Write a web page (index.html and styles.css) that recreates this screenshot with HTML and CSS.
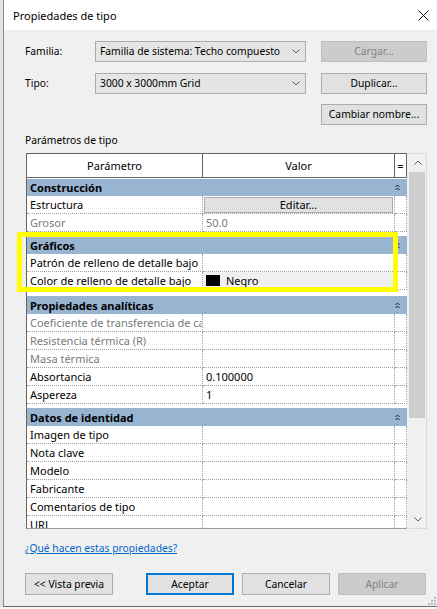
FILE: index.html
```html
<!DOCTYPE html>
<html lang="es">

<head>
    <meta charset="UTF-8">
    <meta name="viewport" content="width=device-width, initial-scale=1.0">
    <title>Propiedades de tipo</title>

    <link rel="stylesheet" href="styles.css">
</head>

<body>

    <div class="desk">
        <div class="strip"></div>

        <div class="dialog">
            <div class="titlebar">
                <span class="title">Propiedades de tipo</span>
                <svg class="close" width="11" height="11" viewBox="0 0 11 11">
                    <path d="M0.5 0.5 L10.5 10.5 M10.5 0.5 L0.5 10.5" stroke="#111" stroke-width="1" fill="none" />
                </svg>
            </div>

            <div class="content">
                <div class="type-form">
                    <label class="label">Familia:</label>
                    <div class="combo">
                        <span>Familia de sistema: Techo compuesto</span>
                        <svg width="8" height="5" viewBox="0 0 8 5"><path d="M0.5 0.5 L4 4 L7.5 0.5" stroke="#555" fill="none" /></svg>
                    </div>
                    <div class="btn disabled">Cargar...</div>

                    <label class="label">Tipo:</label>
                    <div class="combo">
                        <span>3000 x 3000mm Grid</span>
                        <svg width="8" height="5" viewBox="0 0 8 5"><path d="M0.5 0.5 L4 4 L7.5 0.5" stroke="#555" fill="none" /></svg>
                    </div>
                    <div class="btn">Duplicar...</div>

                    <div></div>
                    <div></div>
                    <div class="btn">Cambiar nombre...</div>
                </div>

                <div class="section-label">Parámetros de tipo</div>

                <div class="grid-frame">
                    <div class="props">
                        <div class="row head">
                            <div class="cell">Parámetro</div>
                            <div class="cell">Valor</div>
                            <div class="cell">=</div>
                        </div>

                        <div class="group first">
                            <div class="band"><span>Construcción</span><svg width="5" height="7" viewBox="0 0 5 7"><path d="M0.5 3 L2.5 1 L4.5 3 M0.5 6 L2.5 4 L4.5 6" stroke="#222" fill="none" /></svg></div>
                        </div>
                        <div class="row">
                            <div class="cell">Estructura</div>
                            <div class="cell"><div class="cell-btn">Editar...</div></div>
                            <div class="cell"></div>
                        </div>
                        <div class="row muted">
                            <div class="cell">Grosor</div>
                            <div class="cell">50.0</div>
                            <div class="cell"></div>
                        </div>

                        <div class="group graphics">
                            <div class="band"><span>Gráficos</span><svg width="5" height="7" viewBox="0 0 5 7"><path d="M0.5 3 L2.5 1 L4.5 3 M0.5 6 L2.5 4 L4.5 6" stroke="#222" fill="none" /></svg></div>
                        </div>
                        <div class="row">
                            <div class="cell">Patrón de relleno de detalle bajo</div>
                            <div class="cell"></div>
                            <div class="cell"></div>
                        </div>
                        <div class="row">
                            <div class="cell">Color de relleno de detalle bajo</div>
                            <div class="cell"><div class="color-btn"><span class="swatch"></span>Negro</div></div>
                            <div class="cell"></div>
                        </div>

                        <div class="group analytic">
                            <div class="band"><span>Propiedades analíticas</span><svg width="5" height="7" viewBox="0 0 5 7"><path d="M0.5 3 L2.5 1 L4.5 3 M0.5 6 L2.5 4 L4.5 6" stroke="#222" fill="none" /></svg></div>
                        </div>
                        <div class="row muted">
                            <div class="cell">Coeficiente de transferencia de calor (U)</div>
                            <div class="cell"></div>
                            <div class="cell"></div>
                        </div>
                        <div class="row muted">
                            <div class="cell">Resistencia térmica (R)</div>
                            <div class="cell"></div>
                            <div class="cell"></div>
                        </div>
                        <div class="row muted">
                            <div class="cell">Masa térmica</div>
                            <div class="cell"></div>
                            <div class="cell"></div>
                        </div>
                        <div class="row">
                            <div class="cell">Absortancia</div>
                            <div class="cell">0.100000</div>
                            <div class="cell"></div>
                        </div>
                        <div class="row">
                            <div class="cell">Aspereza</div>
                            <div class="cell">1</div>
                            <div class="cell"></div>
                        </div>

                        <div class="group identity">
                            <div class="band"><span>Datos de identidad</span><svg width="5" height="7" viewBox="0 0 5 7"><path d="M0.5 3 L2.5 1 L4.5 3 M0.5 6 L2.5 4 L4.5 6" stroke="#222" fill="none" /></svg></div>
                        </div>
                        <div class="row">
                            <div class="cell">Imagen de tipo</div>
                            <div class="cell"></div>
                            <div class="cell"></div>
                        </div>
                        <div class="row">
                            <div class="cell">Nota clave</div>
                            <div class="cell"></div>
                            <div class="cell"></div>
                        </div>
                        <div class="row">
                            <div class="cell">Modelo</div>
                            <div class="cell"></div>
                            <div class="cell"></div>
                        </div>
                        <div class="row">
                            <div class="cell">Fabricante</div>
                            <div class="cell"></div>
                            <div class="cell"></div>
                        </div>
                        <div class="row">
                            <div class="cell">Comentarios de tipo</div>
                            <div class="cell"></div>
                            <div class="cell"></div>
                        </div>
                        <div class="row">
                            <div class="cell">URL</div>
                            <div class="cell"></div>
                            <div class="cell"></div>
                        </div>
                    </div>

                    <div class="scrollbar">
                        <div class="arrow">
                            <svg width="8" height="5" viewBox="0 0 8 5"><path d="M0.5 4.5 L4 1 L7.5 4.5" stroke="#606060" fill="none" /></svg>
                        </div>
                        <div class="thumb"></div>
                        <div class="track"></div>
                        <div class="arrow">
                            <svg width="8" height="5" viewBox="0 0 8 5"><path d="M0.5 0.5 L4 4 L7.5 0.5" stroke="#606060" fill="none" /></svg>
                        </div>
                    </div>

                    <div class="highlight"></div>
                </div>

                <a class="help-link" href="#">¿Qué hacen estas propiedades?</a>

                <div class="actions">
                    <div class="btn">&lt;&lt; Vista previa</div>
                    <div class="btn default">Aceptar</div>
                    <div class="btn">Cancelar</div>
                    <div class="btn disabled">Aplicar</div>
                </div>
            </div>

            <svg class="grip" width="8" height="8" viewBox="0 0 8 8">
                <rect x="6" y="0" width="2" height="2" fill="#bcbcbc" />
                <rect x="3" y="3" width="2" height="2" fill="#bcbcbc" />
                <rect x="6" y="3" width="2" height="2" fill="#bcbcbc" />
                <rect x="0" y="6" width="2" height="2" fill="#bcbcbc" />
                <rect x="3" y="6" width="2" height="2" fill="#bcbcbc" />
                <rect x="6" y="6" width="2" height="2" fill="#bcbcbc" />
            </svg>
        </div>
    </div>

</body>

</html>
```

FILE: styles.css
```css
* {
    box-sizing: border-box;
}

html,
body {
    margin: 0;
    padding: 0;
}

body {
    background-color: #f7f7f7;
    font-family: "Noto Sans", "Open Sans", sans-serif;
    font-size: 10.3px;
    color: #000;
    line-height: 1;
}

.desk {
    display: flex;
    width: 437px;
    height: 607px;
    overflow: hidden;
}

.strip {
    flex-shrink: 0;
    width: 3px;
    background-color: #e2e2e2;
}

.dialog {
    position: relative;
    flex: 1;
    min-width: 0;
    display: flex;
    flex-direction: column;
    background-color: #f0f0f0;
    border-left: 1px solid #8a8a8a;
    border-bottom: 1px solid #6a6a6a;
}

.titlebar {
    display: flex;
    align-items: center;
    justify-content: space-between;
    height: 30px;
    padding: 0 8px 0 9px;
    background-color: #fff;
}

.title {
    font-size: 11px;
}

.content {
    padding: 11px 0 0 21px;
}

/* familia / tipo */
.type-form {
    display: grid;
    grid-template-columns: 55px 211px 106px;
    grid-template-rows: 22px 21px 21px;
    column-gap: 15px;
    row-gap: 10px;
}

.label {
    display: flex;
    align-items: center;
    height: 21px;
}

.combo {
    display: flex;
    align-items: center;
    justify-content: space-between;
    height: 21px;
    padding: 0 5px 0 4px;
    background-color: #e5e5e5;
    border: 1px solid #acacac;
    white-space: nowrap;
    overflow: hidden;
}

.btn {
    display: flex;
    align-items: center;
    justify-content: center;
    height: 21px;
    background-color: #e1e1e1;
    border: 1px solid #adadad;
    white-space: nowrap;
}

.btn.disabled {
    background-color: #cccccc;
    border-color: #bfbfbf;
    color: #838383;
}

.btn.default {
    border: 2px solid #0078d7;
}

.section-label {
    height: 15px;
    line-height: 15px;
    margin-top: 8px;
}

/* property grid */
.grid-frame {
    position: relative;
    display: flex;
    width: 401px;
    height: 376px;
    margin-top: 5px;
    margin-left: 1px;
    font-size: 11px;
}

.props {
    flex-shrink: 0;
    width: 381px;
    height: 376px;
    overflow: hidden;
    background-color: #fff;
    border-left: 1px solid #646464;
    border-top: 1px solid #646464;
    border-bottom: 1px solid #9a9a9a;
}

.row {
    display: grid;
    grid-template-columns: 176px 192px 12px;
    height: 18px;
}

.cell {
    height: 18px;
    line-height: 17px;
    padding-left: 3px;
    white-space: nowrap;
    overflow: hidden;
    border-right: 1px dotted #a0a0a0;
    border-bottom: 1px dotted #a0a0a0;
}

.row.head {
    height: 24px;
}

.row.head .cell {
    height: 24px;
    line-height: 23px;
    padding-left: 0;
    text-align: center;
    border-right: 1px solid #646464;
    border-bottom: 1px solid #646464;
}

.row.muted {
    color: #7a7a7a;
}

.cell-btn {
    height: 16px;
    margin: 1px 1px 0 -2px;
    line-height: 14px;
    text-align: center;
    background-color: #e1e1e1;
    border: 1px solid #adadad;
    color: #000;
}

.color-btn {
    display: flex;
    align-items: center;
    gap: 6px;
    height: 17px;
    margin-left: -2px;
    padding-left: 2px;
    background-color: #f0f0f0;
    border-right: 1px solid #c4c4c4;
}

.swatch {
    width: 14px;
    height: 11px;
    background-color: #000;
}

.group.first {
    padding-top: 1px;
}

.group.first .band {
    height: 17px;
}

.group.graphics {
    padding-top: 4px;
}

.group.analytic {
    padding-top: 6px;
}

.group.identity {
    padding-top: 4px;
}

.band {
    display: flex;
    align-items: center;
    justify-content: space-between;
    height: 18px;
    padding: 0 7px 0 3px;
    background-color: #99b4d1;
    font-weight: bold;
}

.scrollbar {
    flex-shrink: 0;
    display: flex;
    flex-direction: column;
    width: 18px;
    margin-left: 2px;
    background-color: #f0f0f0;
    border: 1px solid #dadada;
    border-left: 0;
}

.arrow {
    display: flex;
    align-items: center;
    justify-content: center;
    height: 17px;
}

.thumb {
    height: 246px;
    margin: 1px 1px 0 0;
    background-color: #cdcdcd;
}

.track {
    flex: 1;
}

.highlight {
    position: absolute;
    left: -9px;
    top: 79px;
    width: 381px;
    height: 60px;
    border: 5px solid #ffff00;
}

.help-link {
    display: block;
    width: max-content;
    height: 15px;
    line-height: 15px;
    margin-top: 12px;
    color: #0066cc;
    text-decoration: underline;
}

.actions {
    display: flex;
    margin-top: 17px;
}

.actions .btn {
    flex-shrink: 0;
    width: 88px;
    height: 22px;
    margin-right: 8px;
}

.actions .btn:first-child {
    margin-right: 33px;
}

.grip {
    position: absolute;
    right: 1px;
    bottom: 1px;
}
```
